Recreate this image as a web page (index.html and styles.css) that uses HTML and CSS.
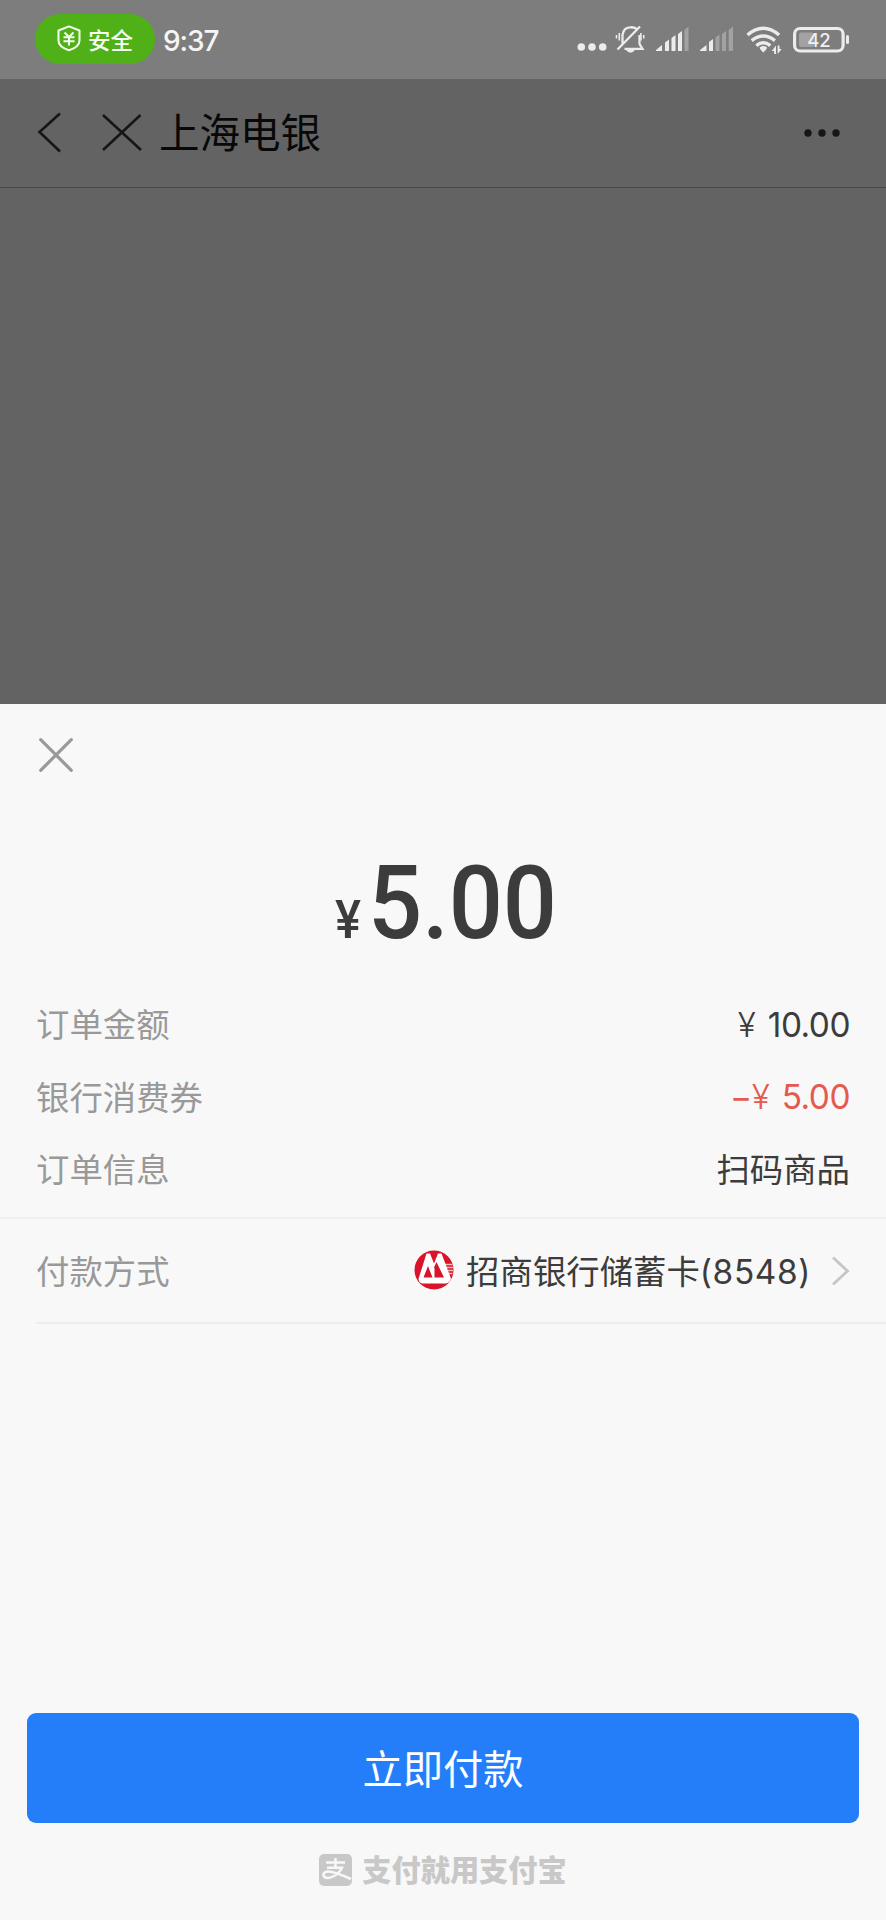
FILE: index.html
```
<!DOCTYPE html>
<html lang="zh-CN">
<head>
<meta charset="utf-8">
<title>付款</title>
<link rel="stylesheet" href="styles.css">
</head>
<body>
<header class="status">
  <div class="pill">
    <svg width="24" height="27" viewBox="0 0 24 27" fill="none" stroke="#f4fff0" stroke-width="2"><path d="M12 1.400 L22.500 5.500 V15.500 C22.500 20 17.500 23.500 12 25.300 C6.500 23.500 1.500 20 1.500 15.500 V5.500 Z" stroke-linejoin="round"/><path d="M7.500 7.500 L12 12 L16.500 7.500 M6.500 12.300 H17.500 M6.500 16.300 H17.500 M12 12 V20.500"/></svg>
    <span>安全</span>
  </div>
  <span class="clock">9:37</span>
  <svg class="signals" width="300" height="40" viewBox="0 0 300 40">
    <g fill="#ececec">
      <circle cx="11.300" cy="27" r="3.800"/><circle cx="22" cy="27" r="3.800"/><circle cx="32.700" cy="27" r="3.800"/>
      <path d="M86 30 L92 25 V31 H86z M95 22.500 l4-3 V31 h-4z M101.500 18 l4-3 V31 h-4z M108 14 l4-3 V31 h-4z"/>
      <path d="M130 30 l6.500-5 V31 H130z M139 22 l4-3 V31 h-4z"/>
      <path d="M189.800 27.300 q3.500-2.400 7 0 q.5 1.600-3.500 5.200 q-4-3.600-3.500-5.200z"/>
      <path d="M206 25.500 v8.500 h-1.900 v-3 h-2.400z M207.600 34 v-8.500 h1.900 v3.500 h2.200z"/>
      <path d="M56 30 h9 q-4.500 5.500-9 0z"/>
    </g>
    <g fill="#a2a2a2"><path d="M114.500 10 l4-3.500 V31 h-4z M145.500 17.500 l4-3 V31 h-4z M152 14 l4-3 V31 h-4z M158.700 10 l4.300-3.500 V31 h-4.300z"/></g>
    <g fill="none" stroke="#ececec">
      <path d="M177.500 15 Q193.300 1.500 209.100 15 M181.700 20.700 Q193.300 11.500 204.900 20.700 M186.300 25.600 Q193.300 20 200.300 25.600" stroke-width="3.400"/>
      <path d="M52.500 23.500 V15 Q53.500 7.500 60 7.300 Q65 7 67.500 10 M69.500 15 V24 L72.500 28.800 H54.500 M47.500 29.500 L70 6.500" stroke-width="2.300"/>
      <path d="M49.300 13 V20.500 M46.500 15 V18.500 M70.900 13 V20.500 M73.700 15 V18.500" stroke-width="1.600"/>
      <rect x="224.600" y="8.500" width="48.500" height="22.500" rx="5.500" stroke-width="3.200"/>
    </g>
    <rect x="229" y="12.500" width="15" height="14.500" rx="2" fill="#a2a2a2"/>
    <rect x="276" y="15" width="3" height="9" rx="1.500" fill="#ececec"/>
    <text class="battery" x="249" y="26.500">42</text>
  </svg>
</header>
<nav class="nav">
  <svg width="106" height="44" viewBox="0 0 106 44" fill="none" stroke="#161616" stroke-width="2.600"><path d="M24 3.500 L3.500 22 L24 41.500 M67 5 L105 40 M104.500 5 L67 40"/></svg>
  <h1 class="title">上海电银</h1>
  <svg class="more" width="38" height="10" viewBox="0 0 38 10" fill="#161616"><circle cx="5" cy="5" r="3.700"/><circle cx="19" cy="5" r="3.700"/><circle cx="33" cy="5" r="3.700"/></svg>
</nav>
<div class="backdrop"></div>
<main class="sheet">
  <svg class="close" width="34" height="34" viewBox="0 0 34 34" fill="none" stroke="#999" stroke-width="3.200" stroke-linecap="round"><path d="M1.700 1.700 L32.300 32.300 M32.300 1.700 L1.700 32.300"/></svg>
  <div class="amount"><svg width="240" height="150" viewBox="0 0 240 150"><text class="yen-big" x="4" y="112" textLength="26" lengthAdjust="spacingAndGlyphs">¥</text><text class="sum" x="37" y="112" textLength="189" lengthAdjust="spacingAndGlyphs">5.00</text></svg></div>
  <dl class="details">
    <div class="row"><dt>订单金额</dt><dd><span class="yen">¥</span><span class="num">10.00</span></dd></div>
    <div class="row"><dt>银行消费券</dt><dd class="discount"><span class="num">−</span><span class="yen">¥</span><span class="num">5.00</span></dd></div>
    <div class="row"><dt>订单信息</dt><dd class="goods">扫码商品</dd></div>
  </dl>
  <div class="method">
    <span class="label">付款方式</span>
    <svg class="bank" width="40" height="40" viewBox="0 0 40 40"><circle cx="20" cy="20" r="19.500" fill="#d9142a"/><path d="M31 14.500 H38.500 M32 17.500 H39 M33 20.500 H39 M34 23.500 H38.500" stroke="#f4b8bd" stroke-width="1.700"/><path d="M12.500 3.500 H16 L20 13.500 L24 3.500 H27.500 L37 28.500 Q36 33 31.500 33.500 H8.500 Q5 33 4.500 29 Z" fill="#fff"/><path d="M14 16 L18.500 27.500 H9.500 Z M20 17.500 L22.500 12 L30 27.500 H20.500 V18.500 Z" fill="#d9142a"/></svg>
    <span class="card">招商银行储蓄卡<span class="digits">(8548)</span></span>
    <svg class="chevron" width="19" height="30" viewBox="0 0 19 30" fill="none" stroke="#c6c6c6" stroke-width="2.800"><path d="M2 1.500 L16.500 15 L2 28.500"/></svg>
  </div>
  <button class="pay">立即付款</button>
  <footer class="brand">
    <svg width="33" height="32" viewBox="0 0 33 32"><rect width="33" height="32" rx="5" fill="#c8c8c8"/><path d="M7 8.500 H26 M16.500 4 V13.500 M8 13.700 H23 Q20.500 19 14 22.500 Q8 25.500 5 22.500 Q3 18.500 8.500 17.500 Q14 17 32 25" fill="none" stroke="#f8f8f8" stroke-width="2.500"/></svg>
    <span>支付就用支付宝</span>
  </footer>
</main>
</body>
</html>
```
FILE: styles.css
```
* { box-sizing: border-box; }
body {
  margin: 0;
  width: 886px;
  height: 1920px;
  display: flex;
  flex-direction: column;
  overflow: hidden;
  background: #636363;
  font-family: "Noto Sans CJK SC", sans-serif;
}
svg { display: block; flex: none; }
.status {
  height: 79px;
  flex: none;
  display: flex;
  align-items: center;
  padding: 0 16px 1px 35px;
  background: #7d7d7d;
}
.pill {
  width: 120px;
  height: 50px;
  border-radius: 25px;
  display: flex;
  align-items: center;
  gap: 7px;
  padding-left: 22px;
  padding-bottom: 1px;
  background: #50b018;
  color: #f4fff0;
  font-size: 22.500px;
  font-weight: 500;
  line-height: 48px;
}
.clock {
  margin-left: 8px;
  padding-top: 3px;
  color: #f5f5f5;
  font: 500 28px/40px Inter, sans-serif;
  letter-spacing: -1.100px;
}
.signals { margin: 2px 0 0 auto; }
.battery { font: 500 18.500px Inter, sans-serif; fill: #f0f0f0; text-anchor: middle; }
.nav {
  height: 109px;
  flex: none;
  display: flex;
  align-items: center;
  padding: 0 45px 2px 36px;
  border-bottom: 1px solid #484848;
}
.title {
  margin: 0 0 0 17px;
  padding-bottom: 3px;
  font-size: 40.500px;
  font-weight: 400;
  line-height: 60px;
  color: #080808;
}
.more { margin: 2px 0 0 auto; }
.backdrop { height: 516px; flex: none; }
.sheet {
  height: 1216px;
  flex: none;
  display: flex;
  flex-direction: column;
  background: #f8f8f8;
  color: #3c3c3c;
}
.close { margin: 34px 0 0 39px; }
.amount { height: 218px; padding-top: 54px; padding-left: 331px; }
.yen-big { font: 500 53px Roboto, sans-serif; fill: #3c3c3c; }
.sum { font: 500 102px Roboto, sans-serif; fill: #3c3c3c; }
.details {
  margin: 0;
  height: 229px;
  padding: 0 36px;
  border-bottom: 2px solid #f0f0f0;
  font-size: 33.400px;
}
.row {
  height: 72.500px;
  display: flex;
  align-items: center;
  justify-content: space-between;
}
dt, .label { color: #999; }
dt, .goods { padding-bottom: 7px; }
dd { margin: 0; display: flex; align-items: center; padding-bottom: 3px; }
.num { font-family: Inter, sans-serif; letter-spacing: -0.500px; }
.yen { font-family: Inter, sans-serif; font-weight: 300; margin-right: 12px; }
.discount { color: #e45a50; }
.method {
  height: 105px;
  flex: none;
  margin-left: 36px;
  padding-right: 36px;
  border-bottom: 2px solid #ededed;
  display: flex;
  align-items: center;
  font-size: 33.400px;
}
.label, .card { padding-bottom: 3px; }
.bank { margin: 0 0 2px auto; }
.card { margin-left: 12px; }
.digits { font-family: Inter, sans-serif; letter-spacing: 0.600px; }
.chevron { margin-left: 20px; }
.pay {
  width: 832px;
  height: 110px;
  flex: none;
  margin: 389px 27px 0;
  padding: 0 0 3px;
  border: 0;
  border-radius: 9px;
  background: #247efa;
  color: #fff;
  font: 400 40.300px/106px "Noto Sans CJK SC", sans-serif;
}
.brand {
  height: 94px;
  display: flex;
  align-items: center;
  justify-content: center;
  gap: 10px;
  color: #c8c8c8;
  font-size: 29.200px;
  font-weight: 900;
}
.brand span { padding-bottom: 4px; }
```
